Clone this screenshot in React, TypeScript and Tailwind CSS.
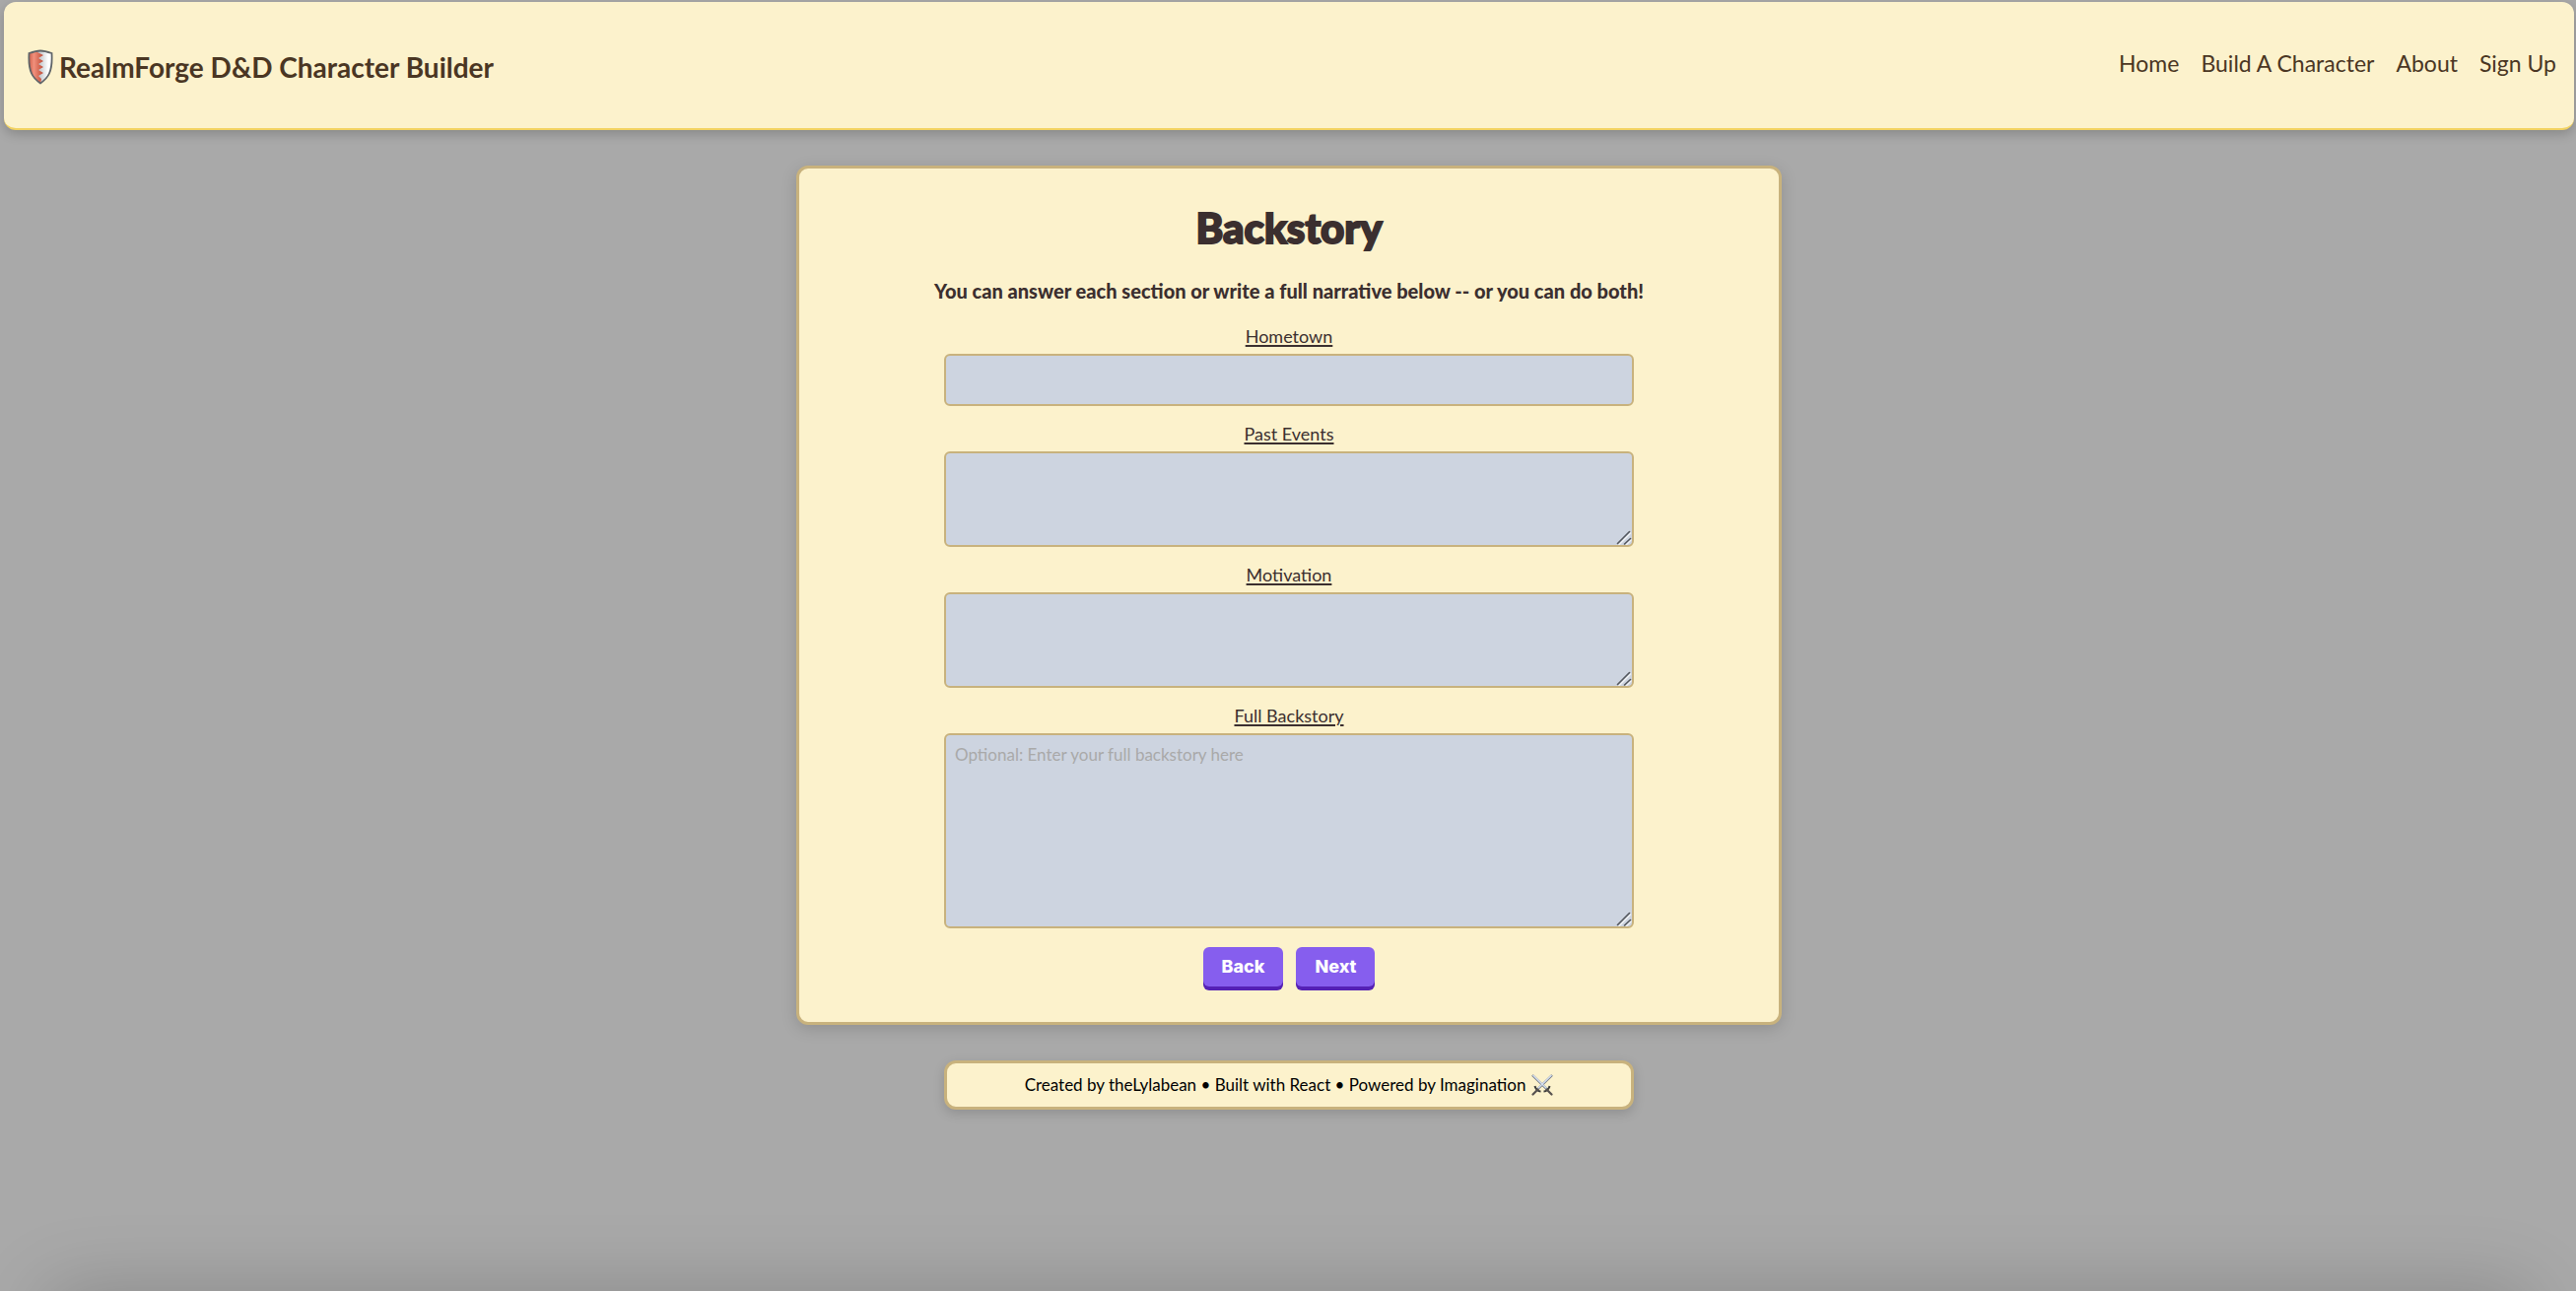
import React from "react";

const NAV = ["Home", "Build A Character", "About", "Sign Up"];

function ShieldIcon() {
  return (
    <svg className="h-9 w-[26px] shrink-0" viewBox="0 0 26 36" aria-hidden="true">
      <defs>
        <linearGradient id="shieldRed" x1="0" x2="1" y1="0" y2="0">
          <stop offset="0" stopColor="#c9543f" />
          <stop offset="0.4" stopColor="#f0907c" />
          <stop offset="1" stopColor="#c04a35" />
        </linearGradient>
        <linearGradient id="shieldSilver" x1="0" x2="1" y1="0" y2="0">
          <stop offset="0" stopColor="#a9adb2" />
          <stop offset="0.45" stopColor="#bfc4c9" />
          <stop offset="0.8" stopColor="#ffffff" />
        </linearGradient>
        <clipPath id="shieldShape">
          <path d="M1.500 4C5 2.800 9 1.500 13 1.500S21 2.800 24.500 4C25 13 24.500 19 22 24.500 20 29 16.500 32 13 34.500 9.500 32 6 29 4 24.500 1.500 19 1 13 1.500 4Z" />
        </clipPath>
      </defs>
      <g clipPath="url(#shieldShape)">
        <rect width="26" height="36" fill="url(#shieldSilver)" />
        <path d="M0 0H10V3L16 6 11 9 16 12 11 15 16 18 11 21 16 24 11 27 14 30 13 36H0Z" fill="url(#shieldRed)" />
      </g>
      <path
        d="M1.500 4C5 2.800 9 1.500 13 1.500S21 2.800 24.500 4C25 13 24.500 19 22 24.500 20 29 16.500 32 13 34.500 9.500 32 6 29 4 24.500 1.500 19 1 13 1.500 4Z"
        fill="none"
        stroke="#5f6468"
        strokeWidth="1.800"
      />
    </svg>
  );
}

function SwordsIcon() {
  return (
    <svg className="size-[22px] shrink-0" viewBox="0 0 22 22" aria-hidden="true">
      <g fill="none">
        <path d="M1 1L16 15.500M21 1L6 15.500" stroke="#6b7280" strokeWidth="2.400" />
        <path d="M1.500 1L16 15M20.500 1L6 15" stroke="#d3deee" strokeWidth="1.500" />
        <path d="M3.500 12C4 14.500 6.500 17.500 9.500 17.500M18.500 12C18 14.500 15.500 17.500 12.500 17.500" stroke="#3d3d3c" strokeWidth="2" />
        <path d="M6.500 15.500L1.500 20.500M15.500 15.500L20.500 20.500" stroke="#57524f" strokeWidth="2.200" strokeLinecap="round" />
      </g>
    </svg>
  );
}

const control =
  "block w-full rounded-md border-2 border-[#c8b27d] bg-[#cdd4e0] px-[9px] py-[7px] text-[17px] text-[#3b2f2f] placeholder:text-[#a9a9a9] focus:outline-none";

type FieldProps = { id: string; label: string; children: React.ReactNode };

function Field({ id, label, children }: FieldProps) {
  return (
    <div className="flex w-full flex-col items-center gap-1">
      <label htmlFor={id} className="text-lg leading-7 underline decoration-2 underline-offset-2">
        {label}
      </label>
      {children}
    </div>
  );
}

type TextAreaProps = { id: string; height: string; placeholder?: string };

function TextArea({ id, height, placeholder }: TextAreaProps) {
  return (
    <div className="relative w-full">
      <textarea
        id={id}
        placeholder={placeholder}
        className={`${control} ${height} resize-y [&::-webkit-resizer]:bg-transparent`}
      />
      <svg
        className="pointer-events-none absolute right-0.5 bottom-0.5 size-4"
        viewBox="0 0 16 16"
        fill="none"
        strokeLinecap="round"
        aria-hidden="true"
      >
        <path d="M3 15.500L14.500 4M10.500 15.500L15 11" stroke="#f1f3f6" strokeWidth="1.500" />
        <path d="M1.500 14.500L13.500 2.500M8.500 15L14.500 9.500" stroke="#53575d" strokeWidth="1.600" />
      </svg>
    </div>
  );
}

function ActionButton({ children }: { children: React.ReactNode }) {
  return (
    <button
      type="button"
      className="h-10 rounded-md bg-[#865eee] px-[19px] font-['Inter',sans-serif] text-lg font-extrabold text-white shadow-[0_4px_0_#5521b5]"
    >
      {children}
    </button>
  );
}

export default function App() {
  return (
    <div className="relative min-h-screen overflow-hidden bg-[#a9a9a9] pt-0.5 pr-0.5 pl-1 font-['Lato',sans-serif]">
      <header className="flex h-[130px] items-center justify-between rounded-xl border-b-2 border-[#f2d261] bg-[#fcf2cc] pr-[18px] pl-6 text-[#4a3623] shadow-[0_4px_12px_rgba(0,0,0,0.2)]">
        <div className="flex items-center gap-1.5 pt-1">
          <ShieldIcon />
          <span className="text-[28px] font-bold">RealmForge D&amp;D Character Builder</span>
        </div>
        <nav className="flex gap-[22px] pb-1 text-[23px]">
          {NAV.map((item) => (
            <a key={item} href="#">
              {item}
            </a>
          ))}
        </nav>
      </header>

      <main className="mx-auto mt-9 flex max-w-[1000px] flex-col items-center rounded-xl border-[3px] border-[#c8b27d] bg-[#fcf2cc] px-[147px] pt-[30px] pb-9 text-[#3b2f2f] shadow-[0_4px_16px_rgba(0,0,0,0.15)]">
        <h1 className="text-[42px] leading-[60px] font-black [-webkit-text-stroke:2px_#3b2f2f]">
          Backstory
        </h1>
        <p className="mt-5 text-xl leading-7 font-black whitespace-nowrap">
          You can answer each section or write a full narrative below -- or you can do both!
        </p>
        <form className="mt-[18px] flex w-full flex-col items-center gap-3.5">
          <Field id="hometown" label="Hometown">
            <input id="hometown" type="text" className={`${control} h-[53px]`} />
          </Field>
          <Field id="events" label="Past Events">
            <TextArea id="events" height="h-[97px]" />
          </Field>
          <Field id="motivation" label="Motivation">
            <TextArea id="motivation" height="h-[97px]" />
          </Field>
          <Field id="backstory" label="Full Backstory">
            <TextArea
              id="backstory"
              height="h-[198px]"
              placeholder="Optional: Enter your full backstory here"
            />
          </Field>
          <div className="mt-[5px] flex gap-[13px]">
            <ActionButton>Back</ActionButton>
            <ActionButton>Next</ActionButton>
          </div>
        </form>
      </main>

      <footer className="mx-auto mt-9 flex h-[50px] max-w-[700px] items-center justify-center gap-1.5 rounded-xl border-[3px] border-[#c8b27d] bg-[#fcf2cc] text-[17px] text-black shadow-[0_4px_12px_rgba(0,0,0,0.15)]">
        <span>Created by theLylabean • Built with React • Powered by Imagination</span>
        <SwordsIcon />
      </footer>

      <div className="pointer-events-none absolute inset-x-12 top-full h-20 shadow-[0_0_80px_rgba(0,0,0,0.2)]" />
    </div>
  );
}
